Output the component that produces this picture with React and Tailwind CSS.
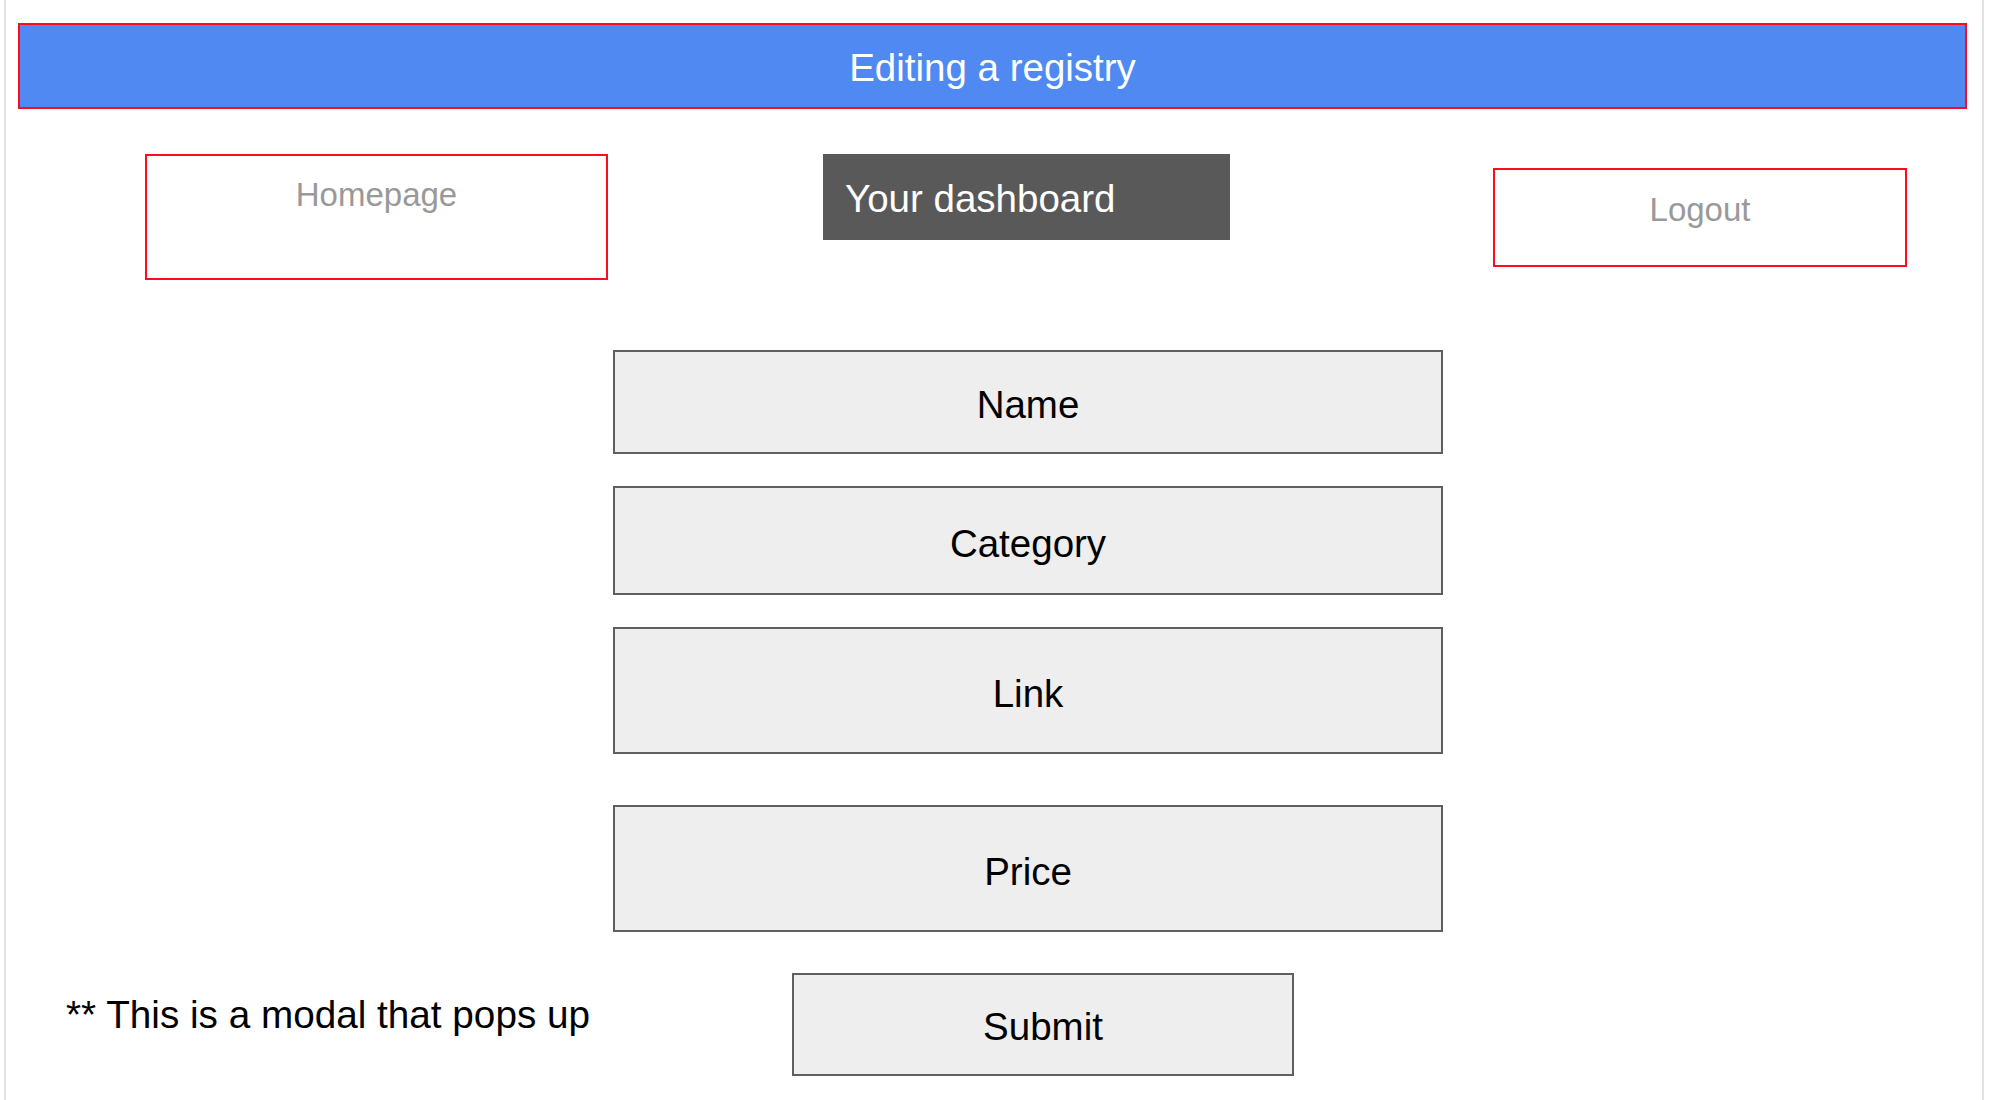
import React from 'react';

const font = { fontFamily: '"Liberation Sans", Arial, sans-serif' };

function Campo({ label, alto }) {
  return (
    <div className={`flex items-center justify-center w-[830px] ${alto} pt-[6px] border-2 border-[#5f5f5f] bg-[#eeeeee] text-[38.5px] text-black`}>
      {label}
    </div>
  );
}

export default function App() {
  const campos = [
    { label: 'Name', alto: 'h-[104px]', mt: 'mt-0' },
    { label: 'Category', alto: 'h-[109px]', mt: 'mt-[32px]' },
    { label: 'Link', alto: 'h-[127px]', mt: 'mt-[32px]' },
    { label: 'Price', alto: 'h-[127px]', mt: 'mt-[51px]' },
  ];

  return (
    <div className="h-screen w-full bg-white pl-[4px] pr-[6px] overflow-hidden" style={font}>
      <div className="h-full border-x-2 border-[#e2e2e2] pt-[23px]">
        {/* header */}
        <div className="ml-[12px] w-[1949px] h-[86px] pt-[3px] border-2 border-[#ff0a1e] bg-[#4f89f1] flex items-center justify-center text-white text-[38.5px]">
          Editing a registry
        </div>

        {/* nav */}
        <div className="flex items-start mt-[45px]">
          <button className="ml-[139px] w-[463px] h-[126px] border-2 border-[#ff0a1e] flex justify-center pt-[20px] text-[33px] leading-[37px] text-[#999999]">
            Homepage
          </button>
          <div className="ml-[215px] w-[407px] h-[86px] pt-[3px] bg-[#595959] flex items-center pl-[22px] text-white text-[38.5px]">
            Your dashboard
          </div>
          <button className="ml-[263px] mt-[14px] w-[414px] h-[99px] border-2 border-[#ff0a1e] flex justify-center pt-[21px] text-[33px] leading-[37px] text-[#999999]">
            Logout
          </button>
        </div>

        {/* form */}
        <div className="ml-[607px] mt-[70px] flex flex-col">
          {campos.map((c) => (
            <div key={c.label} className={c.mt}>
              <Campo label={c.label} alto={c.alto} />
            </div>
          ))}
        </div>

        <div className="flex items-center mt-[41px]">
          <div className="w-[786px] pl-[60px] pb-[18px] text-[38.7px] text-black">
            ** This is a modal that pops up
          </div>
          <button className="w-[502px] h-[103px] pt-[5px] border-2 border-[#5f5f5f] bg-[#eeeeee] flex items-center justify-center text-[38.5px] text-black">
            Submit
          </button>
        </div>
      </div>
    </div>
  );
}
